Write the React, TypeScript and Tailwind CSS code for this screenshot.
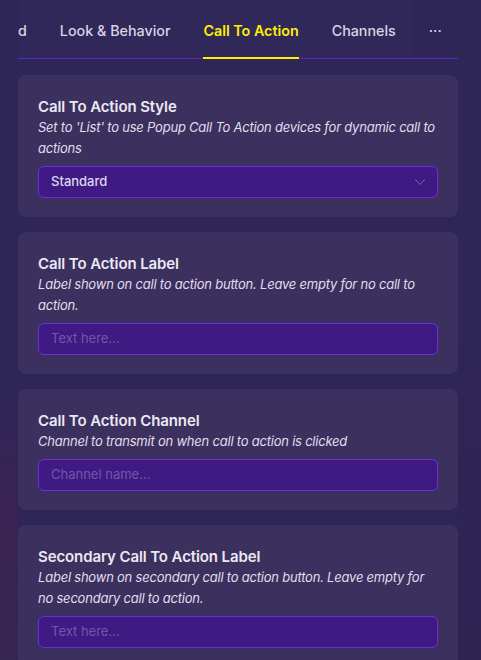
import React from "react";

const font = { fontFamily: "Inter, 'Noto Sans', sans-serif" };

function Chevron() {
  return (
    <svg width="12" height="8" viewBox="0 0 12 8" fill="none" className="text-[#7c5fbc]">
      <path d="M1.5 1.5 L6 6.5 L10.5 1.5" stroke="currentColor" strokeWidth="1" strokeLinecap="round" strokeLinejoin="round" />
    </svg>
  );
}

function Card({ title, desc, children }: { title: string; desc: string; children: React.ReactNode }) {
  return (
    <div className="rounded-lg bg-[#3d325f]/90 px-5 pt-[21px] pb-[19px]">
      <div className="text-[15px] leading-[21px] font-semibold tracking-[-0.1px] text-[#ebe8f2]">{title}</div>
      <div className="text-[13px] leading-[21px] italic tracking-[-0.22px] text-[#e2dded]">{desc}</div>
      <div className="mt-[7px]">{children}</div>
    </div>
  );
}

function Field({ placeholder }: { placeholder: string }) {
  return (
    <div className="h-8 rounded-md border border-[#6a2fdc] bg-[#3f1a82] flex items-center px-3 text-[13px] text-[#6f57a8]">
      {placeholder}
    </div>
  );
}

export default function App() {
  return (
    <div className="w-[481px] h-[660px] overflow-hidden relative bg-[#2e2657]" style={font}>
      <div className="absolute inset-0 pointer-events-none">
        <div className="absolute left-0 top-[390px] w-[18px] h-[270px] bg-gradient-to-b from-[#2e2657] via-[#3a2352] to-[#352650]" />
        <div className="absolute left-[18px] top-0 w-[394px] h-[58px] bg-[#302859]" />
        <div className="absolute right-0 top-[300px] w-[23px] h-[360px] bg-gradient-to-b from-[#2e2657] to-[#2f2352]" />
      </div>
      <div className="relative w-[440px] ml-[18px]">
        <div className="flex items-end h-[59px] border-b border-[#5a22c8]">
          <div className="flex items-end gap-[33px] text-[14.3px] font-medium text-[#d9d4e6]">
            <div className="pb-[17px]">d</div>
            <div className="pb-[17px]">Look &amp; Behavior</div>
            <div className="relative pb-[17px] text-[#ffef00] font-semibold">
              Call To Action
              <div className="absolute left-0 right-0 bottom-[-1px] h-[2px] bg-[#ffef00]" />
            </div>
            <div className="pb-[17px]">Channels</div>
            <div className="pb-[17px]">···</div>
          </div>
        </div>
        <div className="mt-4 flex flex-col gap-[15px]">
          <Card
            title="Call To Action Style"
            desc="Set to 'List' to use Popup Call To Action devices for dynamic call to actions"
          >
            <div className="h-8 rounded-md border border-[#6a2fdc] bg-[#3f1a82] flex items-center justify-between pl-3 pr-[11px] text-[13px] font-medium text-[#ddd6ee]">
              <span>Standard</span>
              <Chevron />
            </div>
          </Card>
          <Card
            title="Call To Action Label"
            desc="Label shown on call to action button. Leave empty for no call to action."
          >
            <Field placeholder="Text here..." />
          </Card>
          <Card title="Call To Action Channel" desc="Channel to transmit on when call to action is clicked">
            <Field placeholder="Channel name..." />
          </Card>
          <Card
            title="Secondary Call To Action Label"
            desc="Label shown on secondary call to action button. Leave empty for no secondary call to action."
          >
            <Field placeholder="Text here..." />
          </Card>
        </div>
      </div>
    </div>
  );
}
